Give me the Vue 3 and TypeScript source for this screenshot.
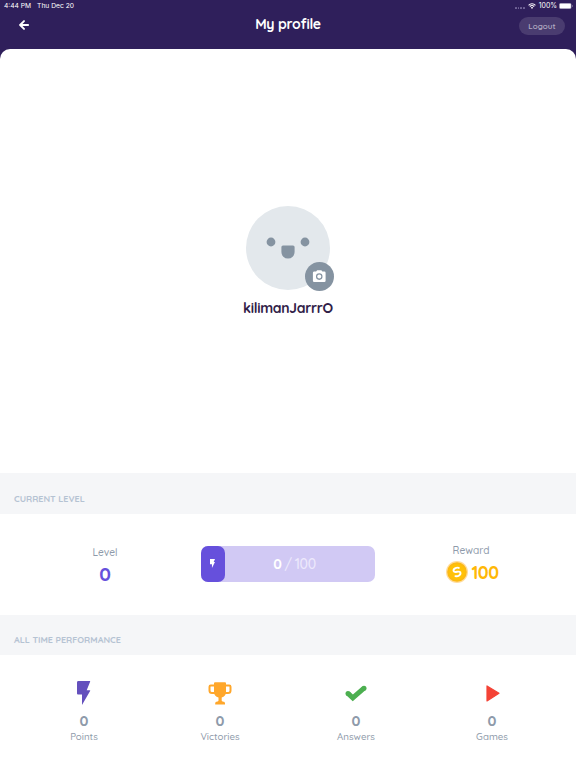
<script setup lang="ts">
interface Stat {
  label: string
  value: number
  icon: 'bolt' | 'trophy' | 'check' | 'play'
}

const user = 'kilimanJarrrO'
const level = 0
const points = 0
const target = 100
const reward = 100

const stats: Stat[] = [
  { label: 'Points', value: 0, icon: 'bolt' },
  { label: 'Victories', value: 0, icon: 'trophy' },
  { label: 'Answers', value: 0, icon: 'check' },
  { label: 'Games', value: 0, icon: 'play' },
]
</script>

<template>
  <div class="screen">
    <div class="status">
      <span class="clock">4:44 PM</span>
      <span class="date">Thu Dec 20</span>
      <span class="cell"><i v-for="n in 4" :key="n" /></span>
      <svg class="wifi" viewBox="0 0 16 12">
        <path d="M1.2 4.6a9.8 9.8 0 0 1 13.6 0M3.7 7.1a6.2 6.2 0 0 1 8.6 0" fill="none" stroke="#fff" stroke-width="2.3" />
        <path d="M5.6 9.1a3.4 3.4 0 0 1 4.8 0L8 11.8z" fill="#fff" />
      </svg>
      <span class="percent">100%</span>
      <svg class="battery" viewBox="0 0 28 12">
        <rect x=".5" y=".5" width="24" height="11" rx="3" fill="none" stroke="#a59dba" />
        <rect x="1.2" y="1.2" width="22.6" height="9.6" rx="2" fill="#fff" />
        <path d="M26 4v4c2-.7 2-3.3 0-4z" fill="#a59dba" />
      </svg>
    </div>

    <header class="header">
      <button class="back" aria-label="Back">
        <svg viewBox="0 0 10 10">
          <path d="M5 1.1 1.1 5 5 8.9M1.3 5h7.9" fill="none" stroke="#fff" stroke-width="1.9" stroke-linecap="round" stroke-linejoin="round" />
        </svg>
      </button>
      <h1>My profile</h1>
      <button class="logout">Logout</button>
    </header>

    <main class="sheet">
      <section class="profile">
        <div class="avatar">
          <svg class="face" viewBox="0 0 84 84">
            <circle cx="42" cy="42" r="42" fill="#e3e8ec" />
            <circle cx="25" cy="36" r="4.4" fill="#8593a1" />
            <circle cx="59" cy="36" r="4.4" fill="#8593a1" />
            <path d="M37 39.5h10a1.6 1.6 0 0 1 1.6 1.6V46a6.6 6.6 0 0 1-13.2 0v-4.9a1.6 1.6 0 0 1 1.6-1.6z" fill="#8593a1" />
          </svg>
          <button class="camera" aria-label="Change photo">
            <svg viewBox="0 0 24 24">
              <path fill-rule="evenodd" d="M8.5 2 6.8 4H3.2A2 2 0 0 0 1.5 6v13.5a2 2 0 0 0 2 2h17a2 2 0 0 0 2-2V6a2 2 0 0 0-2-2h-3.3l-1.7-2zM12 7.2a5.4 5.4 0 1 1 0 10.8 5.4 5.4 0 0 1 0-10.8z" fill="#fff" />
              <circle cx="12" cy="12.6" r="3.3" fill="#fff" />
            </svg>
          </button>
        </div>
        <div class="name">{{ user }}</div>
      </section>

      <h2 class="band first">CURRENT LEVEL</h2>
      <section class="progress">
        <div class="level">
          <span class="caption">Level</span>
          <span class="big">{{ level }}</span>
        </div>
        <div class="bar">
          <div class="fill">
            <svg viewBox="0 0 10 18"><path d="M0 0h10L7.4 6.2H10L3.9 18v-7.5H0z" fill="#fff" /></svg>
          </div>
          <div class="count"><b>{{ points }}</b><span class="slash">/</span><span class="target">{{ target }}</span></div>
        </div>
        <div class="reward">
          <span class="caption">Reward</span>
          <div class="amount">
            <svg viewBox="0 0 22 22">
              <circle cx="11" cy="11" r="11" fill="#ffdc9c" />
              <circle cx="11" cy="11" r="9.8" fill="#fcb913" />
              <circle cx="11" cy="11" r="8" fill="#ffc107" />
              <path d="M12.800 6.900C10.500 5.900 6.800 7.900 7.700 10.200c.9 2.300 5.300-1.100 6.600 1.100 1 2.400-2.400 4.600-4.900 3.800" fill="none" stroke="#fff" stroke-width="1.900" stroke-linecap="round" />
            </svg>
            <span>{{ reward }}</span>
          </div>
        </div>
      </section>

      <h2 class="band second">ALL TIME PERFORMANCE</h2>
      <section class="stats">
        <div v-for="stat in stats" :key="stat.label" class="stat">
          <svg viewBox="0 0 24 24">
            <path v-if="stat.icon === 'bolt'" d="M6.4 0h11.2a.5.5 0 0 1 .5.7L14.7 9.2h2.9a.6.6 0 0 1 .5.9L10 24V13.4H6a1 1 0 0 1-1-1V1.4A1.4 1.4 0 0 1 6.400 0z" fill="#6450bd" />
            <g v-else-if="stat.icon === 'trophy'" fill="#ffa72b">
              <path d="M7 1.2h10a1 1 0 0 1 1 1V11c0 3-1.6 4.7-4.3 5.5v2.8c0 1 .7 1.4 1.7 1.4s1.600.6 1.600 1.600v1.300H7.200v-1.300c0-1 .6-1.600 1.600-1.600s1.700-.4 1.700-1.400v-2.800C7.700 15.700 6 14 6 11V2.200a1 1 0 0 1 1-1z" />
              <path d="M7 4.500H2.800a1.300 1.300 0 0 0-1.300 1.300v3.700c0 1.700 1 2.500 2.500 2.500H7m10-7.500h4.200a1.300 1.300 0 0 1 1.300 1.300v3.700c0 1.700-1 2.500-2.500 2.500H17" fill="none" stroke="#ffa72b" stroke-width="2" />
            </g>
            <g v-else-if="stat.icon === 'check'" fill="#4caf50">
              <path d="m4 12.400 4.800 4.500L20 7.200" fill="none" stroke="#4caf50" stroke-width="5" />
              <circle cx="4" cy="12.400" r="2.500" />
              <circle cx="20" cy="7.200" r="2.500" />
            </g>
            <path v-else d="M7 4.900 19 12.200 7 19.900z" fill="#f44336" stroke="#f44336" stroke-width="1.200" stroke-linejoin="round" />
          </svg>
          <b>{{ stat.value }}</b>
          <span>{{ stat.label }}</span>
        </div>
      </section>
    </main>
  </div>
</template>

<style>
body { margin: 0; background: #2f1f5b; }
</style>

<style scoped>
.screen {
  display: flex;
  flex-direction: column;
  width: 576px;
  height: 768px;
  overflow: hidden;
  background: #2f1f5b;
  font-family: Quicksand, Lato, sans-serif;
}
button { border: 0; padding: 0; font-family: inherit; }
svg { display: block; }
.status {
  display: flex;
  align-items: center;
  height: 12px;
  padding: 0 3px 0 4px;
  color: #fff;
  font: 400 6.700px/12px Inter, sans-serif;
}
.date { margin-left: 6px; }
.cell { display: flex; gap: 1px; margin: 4px 3px 0 auto; }
.cell i { width: 1.700px; height: 1.700px; border-radius: 50%; background: #76699c; }
.wifi { width: 8px; height: 6px; margin-right: 3px; }
.percent { margin-right: 2px; font-size: 6.900px; }
.battery { width: 14px; height: 6px; }
.header {
  display: grid;
  grid-template-columns: 1fr auto 1fr;
  align-items: center;
  height: 27px;
  padding: 0 11px 9.500px;
}
.back { width: 10px; height: 10px; margin: -1px 0 0 8px; background: none; }
.back svg { width: 10px; height: 10px; }
h1 { margin: -3px 0 0; color: #fff; font-size: 14px; line-height: 20px; font-weight: 700; letter-spacing: -.25px; }
.logout {
  justify-self: end;
  width: 46px;
  height: 18px;
  border-radius: 9px;
  background: #4a3c70;
  color: #b3acc3;
  font-size: 8px;
  font-weight: 600;
  line-height: 18px;
  letter-spacing: .1px;
}
.sheet { flex: 1; border-radius: 10px 10px 0 0; background: #fff; overflow: hidden; }
.profile { display: flex; flex-direction: column; align-items: center; height: 267px; padding-top: 157px; }
.avatar { position: relative; width: 84px; height: 84px; }
.face { width: 84px; height: 84px; }
.camera {
  position: absolute;
  right: -3.500px;
  bottom: -1px;
  display: flex;
  align-items: center;
  justify-content: center;
  width: 29px;
  height: 29px;
  border-radius: 50%;
  background: #8593a1;
}
.camera svg { width: 14.500px; height: 14.500px; }
.name { margin-top: 8px; color: #302047; font-size: 14px; line-height: 20px; font-weight: 700; letter-spacing: -.3px; }
.band {
  height: 41px;
  margin: 0;
  padding: 4px 14px 0;
  box-sizing: border-box;
  background: #f5f6f8;
  color: #b5c3d3;
  font-size: 9px;
  line-height: 41px;
  font-weight: 700;
}
.first { padding-top: 5px; }
.second { height: 40px; }
.progress { display: grid; grid-template-columns: 192px 192px 192px; align-items: center; height: 101px; }
.level, .reward { display: flex; flex-direction: column; align-items: center; }
.level { padding: 3px 0 0 18px; }
.reward { padding: 0 16px 0 0; }
.caption { color: #8e9aaa; font-size: 10.200px; line-height: 16px; font-weight: 500; }
.reward .caption { padding-right: 2px; }
.big { margin-top: 1px; color: #6650dc; font-size: 19px; line-height: 25px; font-weight: 700; }
.bar { position: relative; width: 174px; height: 36px; margin-bottom: 1px; justify-self: center; border-radius: 7px; background: #d1c9f4; }
.fill { display: flex; align-items: center; justify-content: center; width: 24px; height: 36px; border-radius: 7px; background: #6650dc; }
.fill svg { width: 5px; height: 9px; margin-right: 1px; }
.count { position: absolute; inset: 0 0 0 13px; color: #fff; text-align: center; font-size: 14px; line-height: 36px; letter-spacing: -.3px; }
.slash, .target { color: #eeeafc; font-weight: 500; }
.slash { margin: 0 3px; }
.amount { display: flex; align-items: center; gap: 4px; color: #ffb806; font-size: 17.600px; line-height: 26px; font-weight: 700; letter-spacing: -.5px; }
.amount svg { width: 22px; height: 22px; }
.stats { display: grid; grid-template-columns: repeat(4, 136px); justify-content: center; padding-top: 26px; }
.stat { display: flex; flex-direction: column; align-items: center; color: #8e9aaa; }
.stat svg { width: 24px; height: 24px; }
.stat b { margin-top: 7px; font-size: 14.500px; line-height: 18px; }
.stat span { font-size: 9.700px; line-height: 12px; font-weight: 500; }
</style>
